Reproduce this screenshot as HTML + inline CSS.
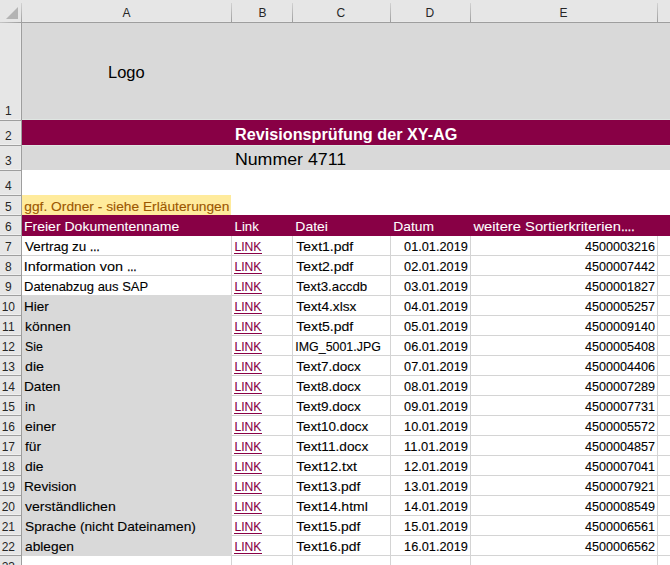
<!DOCTYPE html>
<html><head><meta charset="utf-8"><style>
html,body{margin:0;padding:0;width:670px;height:565px;overflow:hidden;background:#fff}
svg{display:block;font-family:"Liberation Sans",sans-serif}
</style></head><body>
<svg width="670" height="565" viewBox="0 0 670 565">
<defs><linearGradient id="vg" x1="0" y1="0" x2="0" y2="1"><stop offset="0" stop-color="#d2d2d2"/><stop offset="1" stop-color="#9e9e9e"/></linearGradient><linearGradient id="hg" x1="0" y1="0" x2="1" y2="0"><stop offset="0" stop-color="#c4c4c4"/><stop offset="1" stop-color="#9e9e9e"/></linearGradient></defs>
<rect x="0" y="0" width="670" height="565" fill="#fff"/>
<rect x="22" y="255" width="648" height="1" fill="#d4d4d4"/>
<rect x="22" y="275" width="648" height="1" fill="#d4d4d4"/>
<rect x="22" y="295" width="648" height="1" fill="#d4d4d4"/>
<rect x="22" y="315" width="648" height="1" fill="#d4d4d4"/>
<rect x="22" y="335" width="648" height="1" fill="#d4d4d4"/>
<rect x="22" y="355" width="648" height="1" fill="#d4d4d4"/>
<rect x="22" y="375" width="648" height="1" fill="#d4d4d4"/>
<rect x="22" y="395" width="648" height="1" fill="#d4d4d4"/>
<rect x="22" y="415" width="648" height="1" fill="#d4d4d4"/>
<rect x="22" y="435" width="648" height="1" fill="#d4d4d4"/>
<rect x="22" y="455" width="648" height="1" fill="#d4d4d4"/>
<rect x="22" y="475" width="648" height="1" fill="#d4d4d4"/>
<rect x="22" y="495" width="648" height="1" fill="#d4d4d4"/>
<rect x="22" y="515" width="648" height="1" fill="#d4d4d4"/>
<rect x="22" y="535" width="648" height="1" fill="#d4d4d4"/>
<rect x="22" y="555" width="648" height="1" fill="#d4d4d4"/>
<rect x="22" y="575" width="648" height="1" fill="#d4d4d4"/>
<rect x="231" y="236" width="1" height="329" fill="#d4d4d4"/>
<rect x="292" y="236" width="1" height="329" fill="#d4d4d4"/>
<rect x="390" y="236" width="1" height="329" fill="#d4d4d4"/>
<rect x="470" y="236" width="1" height="329" fill="#d4d4d4"/>
<rect x="657" y="236" width="1" height="329" fill="#d4d4d4"/>
<rect x="22" y="23" width="648" height="96" fill="#d9d9d9"/>
<rect x="22" y="119" width="648" height="1" fill="#dfe6e2"/>
<rect x="22" y="120" width="648" height="25" fill="#880045"/>
<rect x="22" y="145" width="648" height="1" fill="#dfe6e2"/>
<rect x="22" y="146" width="648" height="24" fill="#d9d9d9"/>
<rect x="22" y="195" width="209" height="20" fill="#ffeb9c"/>
<rect x="22" y="215" width="648" height="21" fill="#880045"/>
<rect x="22" y="295" width="210" height="261" fill="#d9d9d9"/>
<rect x="0" y="0" width="670" height="22" fill="#e6e6e6"/>
<rect x="0" y="0" width="21" height="565" fill="#e6e6e6"/>
<rect x="21" y="22" width="649" height="1" fill="#9e9e9e"/>
<rect x="0" y="22" width="21" height="1" fill="url(#hg)"/>
<rect x="21" y="23" width="1" height="542" fill="#9e9e9e"/>
<rect x="21" y="3" width="1" height="20" fill="url(#vg)"/>
<rect x="20" y="23" width="1" height="542" fill="#ebebeb"/>
<rect x="22" y="21" width="648" height="1" fill="#e9e9e9"/>
<rect x="231" y="3" width="1" height="19" fill="url(#vg)"/>
<rect x="292" y="3" width="1" height="19" fill="url(#vg)"/>
<rect x="390" y="3" width="1" height="19" fill="url(#vg)"/>
<rect x="470" y="3" width="1" height="19" fill="url(#vg)"/>
<rect x="657" y="3" width="1" height="19" fill="url(#vg)"/>
<rect x="0" y="120" width="21" height="1" fill="#9e9e9e"/>
<rect x="0" y="119" width="20" height="1" fill="#efefef"/>
<rect x="0" y="145" width="21" height="1" fill="#9e9e9e"/>
<rect x="0" y="144" width="20" height="1" fill="#efefef"/>
<rect x="0" y="170" width="21" height="1" fill="#9e9e9e"/>
<rect x="0" y="169" width="20" height="1" fill="#efefef"/>
<rect x="0" y="195" width="21" height="1" fill="#9e9e9e"/>
<rect x="0" y="194" width="20" height="1" fill="#efefef"/>
<rect x="0" y="215" width="21" height="1" fill="#9e9e9e"/>
<rect x="0" y="214" width="20" height="1" fill="#efefef"/>
<rect x="0" y="235" width="21" height="1" fill="#9e9e9e"/>
<rect x="0" y="234" width="20" height="1" fill="#efefef"/>
<rect x="0" y="255" width="21" height="1" fill="#9e9e9e"/>
<rect x="0" y="254" width="20" height="1" fill="#efefef"/>
<rect x="0" y="275" width="21" height="1" fill="#9e9e9e"/>
<rect x="0" y="274" width="20" height="1" fill="#efefef"/>
<rect x="0" y="295" width="21" height="1" fill="#9e9e9e"/>
<rect x="0" y="294" width="20" height="1" fill="#efefef"/>
<rect x="0" y="315" width="21" height="1" fill="#9e9e9e"/>
<rect x="0" y="314" width="20" height="1" fill="#efefef"/>
<rect x="0" y="335" width="21" height="1" fill="#9e9e9e"/>
<rect x="0" y="334" width="20" height="1" fill="#efefef"/>
<rect x="0" y="355" width="21" height="1" fill="#9e9e9e"/>
<rect x="0" y="354" width="20" height="1" fill="#efefef"/>
<rect x="0" y="375" width="21" height="1" fill="#9e9e9e"/>
<rect x="0" y="374" width="20" height="1" fill="#efefef"/>
<rect x="0" y="395" width="21" height="1" fill="#9e9e9e"/>
<rect x="0" y="394" width="20" height="1" fill="#efefef"/>
<rect x="0" y="415" width="21" height="1" fill="#9e9e9e"/>
<rect x="0" y="414" width="20" height="1" fill="#efefef"/>
<rect x="0" y="435" width="21" height="1" fill="#9e9e9e"/>
<rect x="0" y="434" width="20" height="1" fill="#efefef"/>
<rect x="0" y="455" width="21" height="1" fill="#9e9e9e"/>
<rect x="0" y="454" width="20" height="1" fill="#efefef"/>
<rect x="0" y="475" width="21" height="1" fill="#9e9e9e"/>
<rect x="0" y="474" width="20" height="1" fill="#efefef"/>
<rect x="0" y="495" width="21" height="1" fill="#9e9e9e"/>
<rect x="0" y="494" width="20" height="1" fill="#efefef"/>
<rect x="0" y="515" width="21" height="1" fill="#9e9e9e"/>
<rect x="0" y="514" width="20" height="1" fill="#efefef"/>
<rect x="0" y="535" width="21" height="1" fill="#9e9e9e"/>
<rect x="0" y="534" width="20" height="1" fill="#efefef"/>
<rect x="0" y="555" width="21" height="1" fill="#9e9e9e"/>
<rect x="0" y="554" width="20" height="1" fill="#efefef"/>
<rect x="0" y="575" width="21" height="1" fill="#9e9e9e"/>
<rect x="0" y="574" width="20" height="1" fill="#efefef"/>
<polygon points="6,19 18,19 18,7" fill="#b4b4b4"/>
<text x="108.00" y="78" font-size="16.5" fill="#000" stroke="#000" stroke-width="0" textLength="36.68" lengthAdjust="spacingAndGlyphs">Logo</text>
<text x="234.99" y="140" font-size="16.0" font-weight="bold" fill="#fff" stroke="#fff" stroke-width="0" textLength="222.46" lengthAdjust="spacingAndGlyphs">Revisionsprüfung der XY-AG</text>
<text x="234.92" y="165" font-size="16.5" fill="#000" stroke="#000" stroke-width="0" textLength="111.27" lengthAdjust="spacingAndGlyphs">Nummer 4711</text>
<text x="24.30" y="211" font-size="13.0" fill="#9c5700" stroke="#9c5700" stroke-width="0.1" textLength="205.14" lengthAdjust="spacingAndGlyphs">ggf. Ordner - siehe Erläuterungen</text>
<text x="23.92" y="231" font-size="13.0" fill="#fff" stroke="#fff" stroke-width="0.06" textLength="155.33" lengthAdjust="spacingAndGlyphs">Freier Dokumentenname</text>
<text x="234.58" y="231" font-size="13.0" fill="#fff" stroke="#fff" stroke-width="0.06" textLength="24.21" lengthAdjust="spacingAndGlyphs">Link</text>
<text x="295.33" y="231" font-size="13.0" fill="#fff" stroke="#fff" stroke-width="0.06" textLength="32.55" lengthAdjust="spacingAndGlyphs">Datei</text>
<text x="393.34" y="231" font-size="13.0" fill="#fff" stroke="#fff" stroke-width="0.06" textLength="40.75" lengthAdjust="spacingAndGlyphs">Datum</text>
<text x="473.43" y="231" font-size="13.0" fill="#fff" stroke="#fff" stroke-width="0.06" textLength="147.53" lengthAdjust="spacingAndGlyphs">weitere Sortierkriterien</text>
<text x="621.29" y="231" font-size="13.0" fill="#fff" stroke="#fff" stroke-width="0.3" textLength="13.17" lengthAdjust="spacingAndGlyphs">....</text>
<text x="25.00" y="251" font-size="13.0" fill="#000" stroke="#000" stroke-width="0.1" textLength="61.34" lengthAdjust="spacingAndGlyphs">Vertrag zu</text>
<text x="89.82" y="251" font-size="13.0" fill="#000" stroke="#000" stroke-width="0.45" textLength="10.16" lengthAdjust="spacingAndGlyphs">…</text>
<text x="234.46" y="251" font-size="13.0" fill="#880045" stroke="#880045" stroke-width="0.1" textLength="27.03" lengthAdjust="spacingAndGlyphs">LINK</text>
<rect x="234" y="253" width="28" height="1" fill="#880045"/>
<text x="296.30" y="251" font-size="13.0" fill="#000" stroke="#000" stroke-width="0.1" textLength="56.98" lengthAdjust="spacingAndGlyphs">Text1.pdf</text>
<text x="404.10" y="251" font-size="13.0" fill="#000" stroke="#000" stroke-width="0.1" textLength="63.73" lengthAdjust="spacingAndGlyphs">01.01.2019</text>
<text x="585.00" y="251" font-size="13.0" fill="#000" stroke="#000" stroke-width="0.1" textLength="70.02" lengthAdjust="spacingAndGlyphs">4500003216</text>
<text x="23.89" y="271" font-size="13.0" fill="#000" stroke="#000" stroke-width="0.1" textLength="99.16" lengthAdjust="spacingAndGlyphs">Information von</text>
<text x="126.95" y="271" font-size="13.0" fill="#000" stroke="#000" stroke-width="0.45" textLength="9.69" lengthAdjust="spacingAndGlyphs">…</text>
<text x="234.46" y="271" font-size="13.0" fill="#880045" stroke="#880045" stroke-width="0.1" textLength="27.03" lengthAdjust="spacingAndGlyphs">LINK</text>
<rect x="234" y="273" width="28" height="1" fill="#880045"/>
<text x="296.30" y="271" font-size="13.0" fill="#000" stroke="#000" stroke-width="0.1" textLength="56.98" lengthAdjust="spacingAndGlyphs">Text2.pdf</text>
<text x="404.10" y="271" font-size="13.0" fill="#000" stroke="#000" stroke-width="0.1" textLength="63.73" lengthAdjust="spacingAndGlyphs">02.01.2019</text>
<text x="585.00" y="271" font-size="13.0" fill="#000" stroke="#000" stroke-width="0.1" textLength="70.02" lengthAdjust="spacingAndGlyphs">4500007442</text>
<text x="24.00" y="291" font-size="13.0" fill="#000" stroke="#000" stroke-width="0.1" textLength="124.17" lengthAdjust="spacingAndGlyphs">Datenabzug aus SAP</text>
<text x="234.46" y="291" font-size="13.0" fill="#880045" stroke="#880045" stroke-width="0.1" textLength="27.03" lengthAdjust="spacingAndGlyphs">LINK</text>
<rect x="234" y="293" width="28" height="1" fill="#880045"/>
<text x="296.30" y="291" font-size="13.0" fill="#000" stroke="#000" stroke-width="0.1" textLength="70.94" lengthAdjust="spacingAndGlyphs">Text3.accdb</text>
<text x="404.10" y="291" font-size="13.0" fill="#000" stroke="#000" stroke-width="0.1" textLength="63.73" lengthAdjust="spacingAndGlyphs">03.01.2019</text>
<text x="585.00" y="291" font-size="13.0" fill="#000" stroke="#000" stroke-width="0.1" textLength="70.02" lengthAdjust="spacingAndGlyphs">4500001827</text>
<text x="23.96" y="311" font-size="13.0" fill="#000" stroke="#000" stroke-width="0.1" textLength="24.84" lengthAdjust="spacingAndGlyphs">Hier</text>
<text x="234.46" y="311" font-size="13.0" fill="#880045" stroke="#880045" stroke-width="0.1" textLength="27.03" lengthAdjust="spacingAndGlyphs">LINK</text>
<rect x="234" y="313" width="28" height="1" fill="#880045"/>
<text x="296.30" y="311" font-size="13.0" fill="#000" stroke="#000" stroke-width="0.1" textLength="60.07" lengthAdjust="spacingAndGlyphs">Text4.xlsx</text>
<text x="404.10" y="311" font-size="13.0" fill="#000" stroke="#000" stroke-width="0.1" textLength="63.73" lengthAdjust="spacingAndGlyphs">04.01.2019</text>
<text x="585.00" y="311" font-size="13.0" fill="#000" stroke="#000" stroke-width="0.1" textLength="70.02" lengthAdjust="spacingAndGlyphs">4500005257</text>
<text x="25.00" y="331" font-size="13.0" fill="#000" stroke="#000" stroke-width="0.1" textLength="45.65" lengthAdjust="spacingAndGlyphs">können</text>
<text x="234.46" y="331" font-size="13.0" fill="#880045" stroke="#880045" stroke-width="0.1" textLength="27.03" lengthAdjust="spacingAndGlyphs">LINK</text>
<rect x="234" y="333" width="28" height="1" fill="#880045"/>
<text x="296.30" y="331" font-size="13.0" fill="#000" stroke="#000" stroke-width="0.1" textLength="56.98" lengthAdjust="spacingAndGlyphs">Text5.pdf</text>
<text x="404.10" y="331" font-size="13.0" fill="#000" stroke="#000" stroke-width="0.1" textLength="63.73" lengthAdjust="spacingAndGlyphs">05.01.2019</text>
<text x="585.00" y="331" font-size="13.0" fill="#000" stroke="#000" stroke-width="0.1" textLength="70.02" lengthAdjust="spacingAndGlyphs">4500009140</text>
<text x="25.00" y="351" font-size="13.0" fill="#000" stroke="#000" stroke-width="0.1" textLength="17.92" lengthAdjust="spacingAndGlyphs">Sie</text>
<text x="234.46" y="351" font-size="13.0" fill="#880045" stroke="#880045" stroke-width="0.1" textLength="27.03" lengthAdjust="spacingAndGlyphs">LINK</text>
<rect x="234" y="353" width="28" height="1" fill="#880045"/>
<text x="295.35" y="351" font-size="13.0" fill="#000" stroke="#000" stroke-width="0.1" textLength="85.46" lengthAdjust="spacingAndGlyphs">IMG_5001.JPG</text>
<text x="404.10" y="351" font-size="13.0" fill="#000" stroke="#000" stroke-width="0.1" textLength="63.73" lengthAdjust="spacingAndGlyphs">06.01.2019</text>
<text x="585.00" y="351" font-size="13.0" fill="#000" stroke="#000" stroke-width="0.1" textLength="70.02" lengthAdjust="spacingAndGlyphs">4500005408</text>
<text x="25.00" y="371" font-size="13.0" fill="#000" stroke="#000" stroke-width="0.1" textLength="19.05" lengthAdjust="spacingAndGlyphs">die</text>
<text x="234.46" y="371" font-size="13.0" fill="#880045" stroke="#880045" stroke-width="0.1" textLength="27.03" lengthAdjust="spacingAndGlyphs">LINK</text>
<rect x="234" y="373" width="28" height="1" fill="#880045"/>
<text x="296.30" y="371" font-size="13.0" fill="#000" stroke="#000" stroke-width="0.1" textLength="64.58" lengthAdjust="spacingAndGlyphs">Text7.docx</text>
<text x="404.10" y="371" font-size="13.0" fill="#000" stroke="#000" stroke-width="0.1" textLength="63.73" lengthAdjust="spacingAndGlyphs">07.01.2019</text>
<text x="585.00" y="371" font-size="13.0" fill="#000" stroke="#000" stroke-width="0.1" textLength="70.02" lengthAdjust="spacingAndGlyphs">4500004406</text>
<text x="23.95" y="391" font-size="13.0" fill="#000" stroke="#000" stroke-width="0.1" textLength="36.49" lengthAdjust="spacingAndGlyphs">Daten</text>
<text x="234.46" y="391" font-size="13.0" fill="#880045" stroke="#880045" stroke-width="0.1" textLength="27.03" lengthAdjust="spacingAndGlyphs">LINK</text>
<rect x="234" y="393" width="28" height="1" fill="#880045"/>
<text x="296.30" y="391" font-size="13.0" fill="#000" stroke="#000" stroke-width="0.1" textLength="64.58" lengthAdjust="spacingAndGlyphs">Text8.docx</text>
<text x="404.10" y="391" font-size="13.0" fill="#000" stroke="#000" stroke-width="0.1" textLength="63.73" lengthAdjust="spacingAndGlyphs">08.01.2019</text>
<text x="585.00" y="391" font-size="13.0" fill="#000" stroke="#000" stroke-width="0.1" textLength="70.02" lengthAdjust="spacingAndGlyphs">4500007289</text>
<text x="25.00" y="411" font-size="13.0" fill="#000" stroke="#000" stroke-width="0.1" textLength="10.13" lengthAdjust="spacingAndGlyphs">in</text>
<text x="234.46" y="411" font-size="13.0" fill="#880045" stroke="#880045" stroke-width="0.1" textLength="27.03" lengthAdjust="spacingAndGlyphs">LINK</text>
<rect x="234" y="413" width="28" height="1" fill="#880045"/>
<text x="296.30" y="411" font-size="13.0" fill="#000" stroke="#000" stroke-width="0.1" textLength="64.58" lengthAdjust="spacingAndGlyphs">Text9.docx</text>
<text x="404.10" y="411" font-size="13.0" fill="#000" stroke="#000" stroke-width="0.1" textLength="63.73" lengthAdjust="spacingAndGlyphs">09.01.2019</text>
<text x="585.00" y="411" font-size="13.0" fill="#000" stroke="#000" stroke-width="0.1" textLength="70.02" lengthAdjust="spacingAndGlyphs">4500007731</text>
<text x="25.00" y="431" font-size="13.0" fill="#000" stroke="#000" stroke-width="0.1" textLength="30.98" lengthAdjust="spacingAndGlyphs">einer</text>
<text x="234.46" y="431" font-size="13.0" fill="#880045" stroke="#880045" stroke-width="0.1" textLength="27.03" lengthAdjust="spacingAndGlyphs">LINK</text>
<rect x="234" y="433" width="28" height="1" fill="#880045"/>
<text x="296.30" y="431" font-size="13.0" fill="#000" stroke="#000" stroke-width="0.1" textLength="71.98" lengthAdjust="spacingAndGlyphs">Text10.docx</text>
<text x="404.10" y="431" font-size="13.0" fill="#000" stroke="#000" stroke-width="0.1" textLength="63.73" lengthAdjust="spacingAndGlyphs">10.01.2019</text>
<text x="585.00" y="431" font-size="13.0" fill="#000" stroke="#000" stroke-width="0.1" textLength="70.02" lengthAdjust="spacingAndGlyphs">4500005572</text>
<text x="25.00" y="451" font-size="13.0" fill="#000" stroke="#000" stroke-width="0.1" textLength="16.09" lengthAdjust="spacingAndGlyphs">für</text>
<text x="234.46" y="451" font-size="13.0" fill="#880045" stroke="#880045" stroke-width="0.1" textLength="27.03" lengthAdjust="spacingAndGlyphs">LINK</text>
<rect x="234" y="453" width="28" height="1" fill="#880045"/>
<text x="296.30" y="451" font-size="13.0" fill="#000" stroke="#000" stroke-width="0.1" textLength="71.97" lengthAdjust="spacingAndGlyphs">Text11.docx</text>
<text x="404.10" y="451" font-size="13.0" fill="#000" stroke="#000" stroke-width="0.1" textLength="63.73" lengthAdjust="spacingAndGlyphs">11.01.2019</text>
<text x="585.00" y="451" font-size="13.0" fill="#000" stroke="#000" stroke-width="0.1" textLength="70.02" lengthAdjust="spacingAndGlyphs">4500004857</text>
<text x="25.00" y="471" font-size="13.0" fill="#000" stroke="#000" stroke-width="0.1" textLength="18.55" lengthAdjust="spacingAndGlyphs">die</text>
<text x="234.46" y="471" font-size="13.0" fill="#880045" stroke="#880045" stroke-width="0.1" textLength="27.03" lengthAdjust="spacingAndGlyphs">LINK</text>
<rect x="234" y="473" width="28" height="1" fill="#880045"/>
<text x="296.30" y="471" font-size="13.0" fill="#000" stroke="#000" stroke-width="0.1" textLength="60.68" lengthAdjust="spacingAndGlyphs">Text12.txt</text>
<text x="404.10" y="471" font-size="13.0" fill="#000" stroke="#000" stroke-width="0.1" textLength="63.73" lengthAdjust="spacingAndGlyphs">12.01.2019</text>
<text x="585.00" y="471" font-size="13.0" fill="#000" stroke="#000" stroke-width="0.1" textLength="70.02" lengthAdjust="spacingAndGlyphs">4500007041</text>
<text x="23.95" y="491" font-size="13.0" fill="#000" stroke="#000" stroke-width="0.1" textLength="52.39" lengthAdjust="spacingAndGlyphs">Revision</text>
<text x="234.46" y="491" font-size="13.0" fill="#880045" stroke="#880045" stroke-width="0.1" textLength="27.03" lengthAdjust="spacingAndGlyphs">LINK</text>
<rect x="234" y="493" width="28" height="1" fill="#880045"/>
<text x="296.30" y="491" font-size="13.0" fill="#000" stroke="#000" stroke-width="0.1" textLength="64.09" lengthAdjust="spacingAndGlyphs">Text13.pdf</text>
<text x="404.10" y="491" font-size="13.0" fill="#000" stroke="#000" stroke-width="0.1" textLength="63.73" lengthAdjust="spacingAndGlyphs">13.01.2019</text>
<text x="585.00" y="491" font-size="13.0" fill="#000" stroke="#000" stroke-width="0.1" textLength="70.02" lengthAdjust="spacingAndGlyphs">4500007921</text>
<text x="25.00" y="511" font-size="13.0" fill="#000" stroke="#000" stroke-width="0.1" textLength="90.75" lengthAdjust="spacingAndGlyphs">verständlichen</text>
<text x="234.46" y="511" font-size="13.0" fill="#880045" stroke="#880045" stroke-width="0.1" textLength="27.03" lengthAdjust="spacingAndGlyphs">LINK</text>
<rect x="234" y="513" width="28" height="1" fill="#880045"/>
<text x="296.30" y="511" font-size="13.0" fill="#000" stroke="#000" stroke-width="0.1" textLength="71.48" lengthAdjust="spacingAndGlyphs">Text14.html</text>
<text x="404.10" y="511" font-size="13.0" fill="#000" stroke="#000" stroke-width="0.1" textLength="63.73" lengthAdjust="spacingAndGlyphs">14.01.2019</text>
<text x="585.00" y="511" font-size="13.0" fill="#000" stroke="#000" stroke-width="0.1" textLength="70.02" lengthAdjust="spacingAndGlyphs">4500008549</text>
<text x="25.00" y="531" font-size="13.0" fill="#000" stroke="#000" stroke-width="0.1" textLength="170.85" lengthAdjust="spacingAndGlyphs">Sprache (nicht Dateinamen)</text>
<text x="234.46" y="531" font-size="13.0" fill="#880045" stroke="#880045" stroke-width="0.1" textLength="27.03" lengthAdjust="spacingAndGlyphs">LINK</text>
<rect x="234" y="533" width="28" height="1" fill="#880045"/>
<text x="296.30" y="531" font-size="13.0" fill="#000" stroke="#000" stroke-width="0.1" textLength="64.09" lengthAdjust="spacingAndGlyphs">Text15.pdf</text>
<text x="404.10" y="531" font-size="13.0" fill="#000" stroke="#000" stroke-width="0.1" textLength="63.73" lengthAdjust="spacingAndGlyphs">15.01.2019</text>
<text x="585.00" y="531" font-size="13.0" fill="#000" stroke="#000" stroke-width="0.1" textLength="70.02" lengthAdjust="spacingAndGlyphs">4500006561</text>
<text x="25.00" y="551" font-size="13.0" fill="#000" stroke="#000" stroke-width="0.1" textLength="48.94" lengthAdjust="spacingAndGlyphs">ablegen</text>
<text x="234.46" y="551" font-size="13.0" fill="#880045" stroke="#880045" stroke-width="0.1" textLength="27.03" lengthAdjust="spacingAndGlyphs">LINK</text>
<rect x="234" y="553" width="28" height="1" fill="#880045"/>
<text x="296.30" y="551" font-size="13.0" fill="#000" stroke="#000" stroke-width="0.1" textLength="64.09" lengthAdjust="spacingAndGlyphs">Text16.pdf</text>
<text x="404.10" y="551" font-size="13.0" fill="#000" stroke="#000" stroke-width="0.1" textLength="63.73" lengthAdjust="spacingAndGlyphs">16.01.2019</text>
<text x="585.00" y="551" font-size="13.0" fill="#000" stroke="#000" stroke-width="0.1" textLength="70.02" lengthAdjust="spacingAndGlyphs">4500006562</text>
<text x="122.50" y="17" font-size="12.0" fill="#262626">A</text>
<text x="258.50" y="17" font-size="12.0" fill="#262626">B</text>
<text x="336.50" y="17" font-size="12.0" fill="#262626">C</text>
<text x="425.50" y="17" font-size="12.0" fill="#262626">D</text>
<text x="559.50" y="17" font-size="12.0" fill="#262626">E</text>
<text x="5.00" y="115" font-size="12.0" fill="#262626">1</text>
<text x="5.00" y="140" font-size="12.0" fill="#262626">2</text>
<text x="5.00" y="165" font-size="12.0" fill="#262626">3</text>
<text x="5.00" y="190" font-size="12.0" fill="#262626">4</text>
<text x="5.00" y="211" font-size="12.0" fill="#262626">5</text>
<text x="5.00" y="231" font-size="12.0" fill="#262626">6</text>
<text x="5.00" y="251" font-size="12.0" fill="#262626">7</text>
<text x="5.00" y="271" font-size="12.0" fill="#262626">8</text>
<text x="5.00" y="291" font-size="12.0" fill="#262626">9</text>
<text x="1.66" y="311" font-size="12.0" fill="#262626">10</text>
<text x="2.11" y="331" font-size="12.0" fill="#262626">11</text>
<text x="1.66" y="351" font-size="12.0" fill="#262626">12</text>
<text x="1.66" y="371" font-size="12.0" fill="#262626">13</text>
<text x="1.66" y="391" font-size="12.0" fill="#262626">14</text>
<text x="1.66" y="411" font-size="12.0" fill="#262626">15</text>
<text x="1.66" y="431" font-size="12.0" fill="#262626">16</text>
<text x="1.66" y="451" font-size="12.0" fill="#262626">17</text>
<text x="1.66" y="471" font-size="12.0" fill="#262626">18</text>
<text x="1.66" y="491" font-size="12.0" fill="#262626">19</text>
<text x="1.66" y="511" font-size="12.0" fill="#262626">20</text>
<text x="1.66" y="531" font-size="12.0" fill="#262626">21</text>
<text x="1.66" y="551" font-size="12.0" fill="#262626">22</text>
<text x="1.66" y="571" font-size="12.0" fill="#262626">23</text>
</svg>
</body></html>
